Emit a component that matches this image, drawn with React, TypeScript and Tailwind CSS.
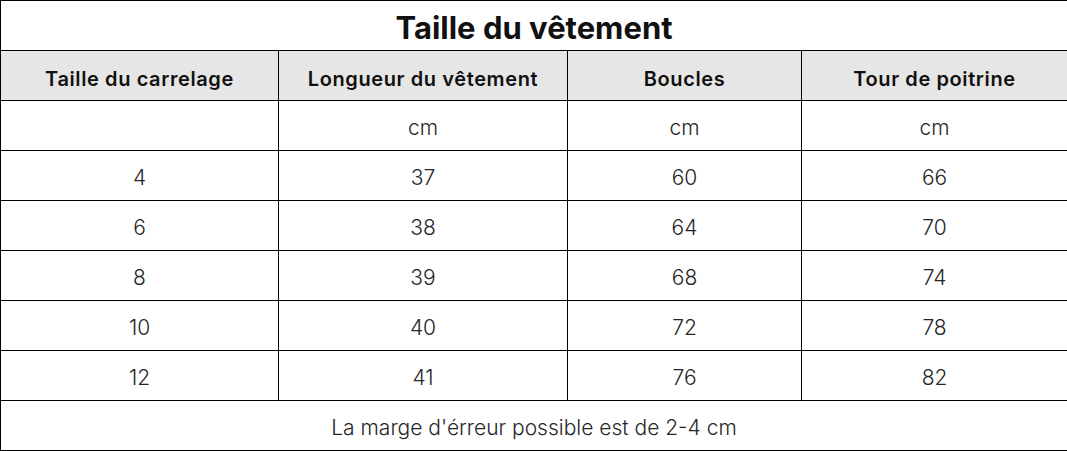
// Size chart table: "Taille du vêtement"

const ROWS = [
    ["4", "37", "60", "66"],
    ["6", "38", "64", "70"],
    ["8", "39", "68", "74"],
    ["10", "40", "72", "78"],
    ["12", "41", "76", "82"],
];

const HEADERS = ["Taille du carrelage", "Longueur du vêtement", "Boucles", "Tour de poitrine"];

const font = "font-['Inter','Noto_Sans',sans-serif]";

export default function App() {
    return (
        <div className={`w-[1067px] h-[451px] bg-white ${font}`}>
            <table className="w-[1067px] border-collapse table-fixed text-[#111]">
                <colgroup>
                    <col className="w-[278px]" />
                    <col className="w-[289px]" />
                    <col className="w-[234px]" />
                    <col className="w-[266px]" />
                </colgroup>
                <tbody>
                    <tr className="h-[50px]">
                        <td colSpan={4} className="border-[1.5px] border-black text-center text-[31px] font-bold leading-none pt-[3px]">
                            Taille du vêtement
                        </td>
                    </tr>
                    <tr className="h-[50px] bg-[#e7e6e6]">
                        {HEADERS.map((h) => (
                            <td key={h} className="border-[1.5px] border-black text-center text-[20px] tracking-[0.6px] font-semibold leading-none pt-[6px]">
                                {h}
                            </td>
                        ))}
                    </tr>
                    <tr className="h-[50px]">
                        <td className="border-[1.5px] border-black"></td>
                        {["cm", "cm", "cm"].map((u, i) => (
                            <td key={i} className="border-[1.5px] border-black text-center text-[21px] font-light text-[#262626] leading-none pt-[4px]">
                                {u}
                            </td>
                        ))}
                    </tr>
                    {ROWS.map((row, r) => (
                        <tr key={r} className="h-[50px]">
                            {row.map((v, i) => (
                                <td key={i} className="border-[1.5px] border-black text-center text-[21px] font-light text-[#262626] leading-none pt-[4px]">
                                    {v}
                                </td>
                            ))}
                        </tr>
                    ))}
                    <tr className="h-[50px]">
                        <td colSpan={4} className="border-[1.5px] border-black text-center text-[21px] font-light text-[#262626] leading-none pt-[4px]">
                            La marge d'érreur possible est de 2-4 cm
                        </td>
                    </tr>
                </tbody>
            </table>
        </div>
    );
}
